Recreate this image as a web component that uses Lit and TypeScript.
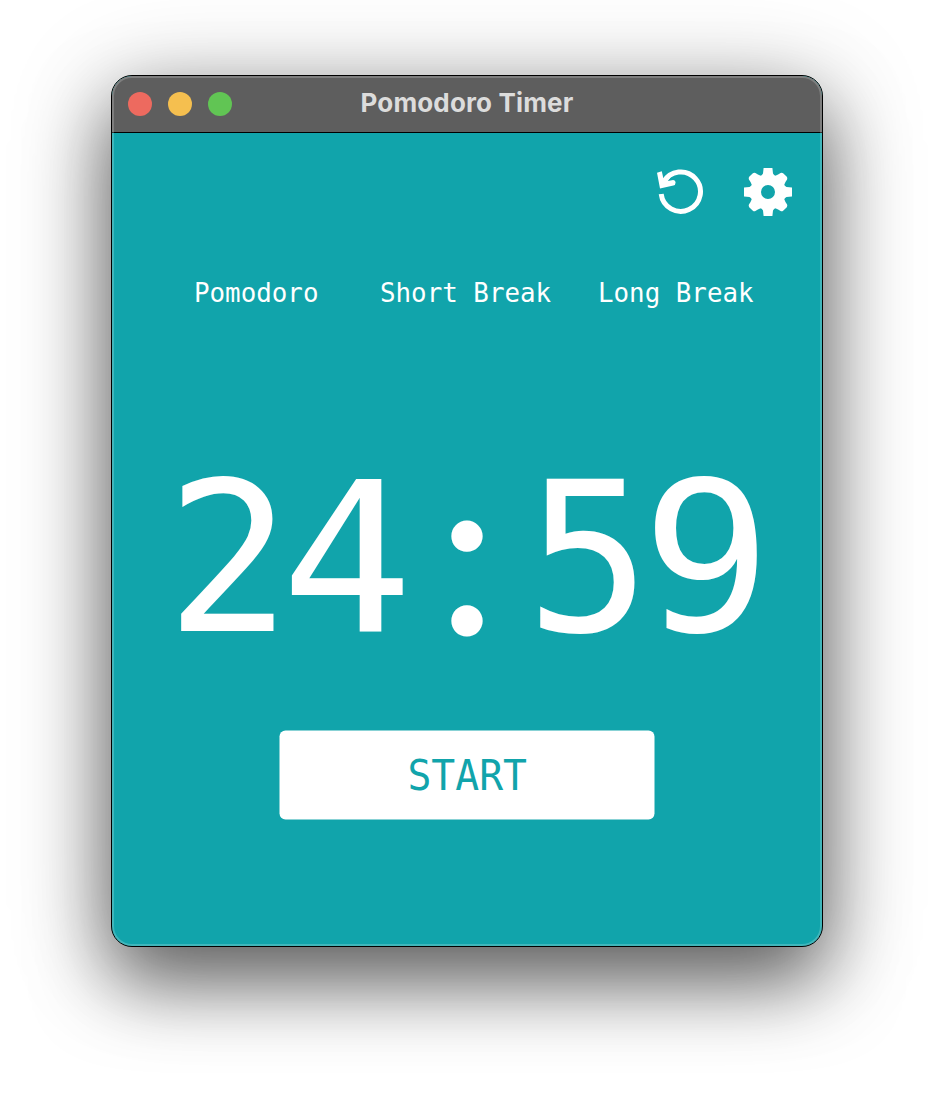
import { LitElement, html, css, svg } from "lit";
import { customElement, state } from "lit/decorators.js";
import { classMap } from "lit/directives/class-map.js";

@customElement("icon-reset")
class IconReset extends LitElement {
  static styles = css`
    :host { display: block; width: 48px; height: 48px; }
    svg { display: block; }
  `;
  render() {
    return html`<svg width="48" height="48" viewBox="0 0 48 48" fill="none">
      <path d="M4.2 26A19.7 19.7 0 1 0 6.6 14" stroke="#fff" stroke-width="5"></path>
      <path d="M0 4.8L4.8 3.2L6.4 10.6L10.5 6.5L13.5 9.5L10.8 13L16.2 11.9Q18.6 12 18.6 14.6Q18.6 17.2 16.4 17.6L3 20.6Z" fill="#fff"></path>
    </svg>`;
  }
}

@customElement("icon-gear")
class IconGear extends LitElement {
  static styles = css`
    :host { display: block; width: 48px; height: 48px; }
    svg { display: block; }
  `;
  render() {
    return html`<svg width="48" height="48" viewBox="-24 -24 48 48" fill="#fff">
      <circle r="12.4" fill="none" stroke="#fff" stroke-width="10.8"></circle>
      ${[0, 90, 180, 270].map((a) => svg`<path d="M-7.5 -15L-5 -18.5L-4.4 -24H4.4L5 -18.5L7.5 -15Z" transform="rotate(${a})"></path>`)}
      ${[45, 135, 225, 315].map((a) => svg`<path d="M-7 -15L-5.2 -19.5L-4.6 -22.4Q-4 -23.8 -2.6 -24H2.6Q4 -23.8 4.6 -22.4L5.2 -19.5L7 -15Z" transform="rotate(${a})"></path>`)}
    </svg>`;
  }
}

@customElement("app-root")
class AppRoot extends LitElement {
  @state() time = "24:59";

  static styles = css`
    :host {
      display: flex;
      justify-content: center;
      box-sizing: border-box;
      height: 1094px;
      padding-top: 75px;
      background: #fff;
      overflow: hidden;
    }
    .window {
      position: relative;
      box-sizing: border-box;
      display: flex;
      flex-direction: column;
      width: 712px;
      height: 872px;
      border: 1px solid #000;
      border-radius: 21px;
      background: #11a4ab;
      box-shadow: 0 36px 76px rgba(0, 0, 0, 0.52), 0 14px 100px rgba(0, 0, 0, 0.28);
    }
    .window::after {
      content: "";
      position: absolute;
      inset: 0;
      border-radius: 20px;
      box-shadow: inset 0 0 0 2px rgba(255, 255, 255, 0.2);
      pointer-events: none;
    }
    .titlebar {
      display: grid;
      grid-template-columns: 1fr auto 1fr;
      align-items: center;
      box-sizing: border-box;
      height: 57px;
      padding: 0 16px;
      border-bottom: 1px solid #000;
      border-radius: 20px 20px 0 0;
      background: #5e5e5e;
    }
    .lights { display: flex; gap: 16px; }
    .light { width: 24px; height: 24px; border-radius: 50%; }
    .red { background: #ed6a5f; }
    .yellow { background: #f5bf4f; }
    .green { background: #61c554; }
    .title {
      font: 700 26px/30px Inter, sans-serif;
      letter-spacing: 0.15px;
      color: #dcdcdc;
      padding-bottom: 2px;
    }
    .tools {
      display: flex;
      justify-content: flex-end;
      gap: 39px;
      padding: 35px 30px 0 0;
    }
    .tabs {
      display: grid;
      grid-template-columns: 185.5px 218.5px 155px;
      padding: 61px 0 0 82px;
      height: 32px;
    }
    .tab {
      font: 27px/32px "DejaVu Sans Mono", monospace;
      color: #fff;
      white-space: pre;
      transform: scaleX(0.957);
      transform-origin: 0 50%;
    }
    .clock {
      display: grid;
      grid-template-columns: repeat(5, 120px);
      justify-content: center;
      height: 240px;
      margin-top: 130px;
    }
    .digit {
      display: flex;
      justify-content: center;
      font: 209px/240px "DejaVu Sans Mono", monospace;
      color: #fff;
      transform: translateX(1.5px) scaleX(0.996);
    }
    .digit.four { transform: translateX(0) scaleX(1.05); }
    .digit.nine { transform: translateX(-0.5px) scaleX(1.03); }
    .digit.colon {
      font: 400 226px/240px Lato, sans-serif;
      -webkit-text-stroke: 3px #fff;
      transform: translateY(-13.5px);
    }
    .start {
      align-self: center;
      width: 375px;
      height: 89px;
      margin-top: 52px;
      padding: 0;
      border: 0;
      border-radius: 6px;
      background: #fff;
      color: #11a4ab;
      font: 42px/89px "DejaVu Sans Mono", monospace;
      transform: translate(-0.5px, -0.5px);
    }
    .label { display: inline-block; transform: translateX(0.5px) scaleX(0.945); }
  `;

  render() {
    return html`<main class="window">
      <header class="titlebar">
        <div class="lights">
          <span class="light red"></span><span class="light yellow"></span><span class="light green"></span>
        </div>
        <div class="title">Pomodoro Timer</div>
        <span></span>
      </header>
      <div class="tools"><icon-reset></icon-reset><icon-gear></icon-gear></div>
      <nav class="tabs">
        ${["Pomodoro", "Short Break", "Long Break"].map((t) => html`<span class="tab">${t}</span>`)}
      </nav>
      <div class="clock">
        ${[...this.time].map(
          (c) => html`<span class=${classMap({ digit: true, colon: c === ":", four: c === "4", nine: c === "9" })}>${c}</span>`
        )}
      </div>
      <button class="start"><span class="label">START</span></button>
    </main>`;
  }
}
